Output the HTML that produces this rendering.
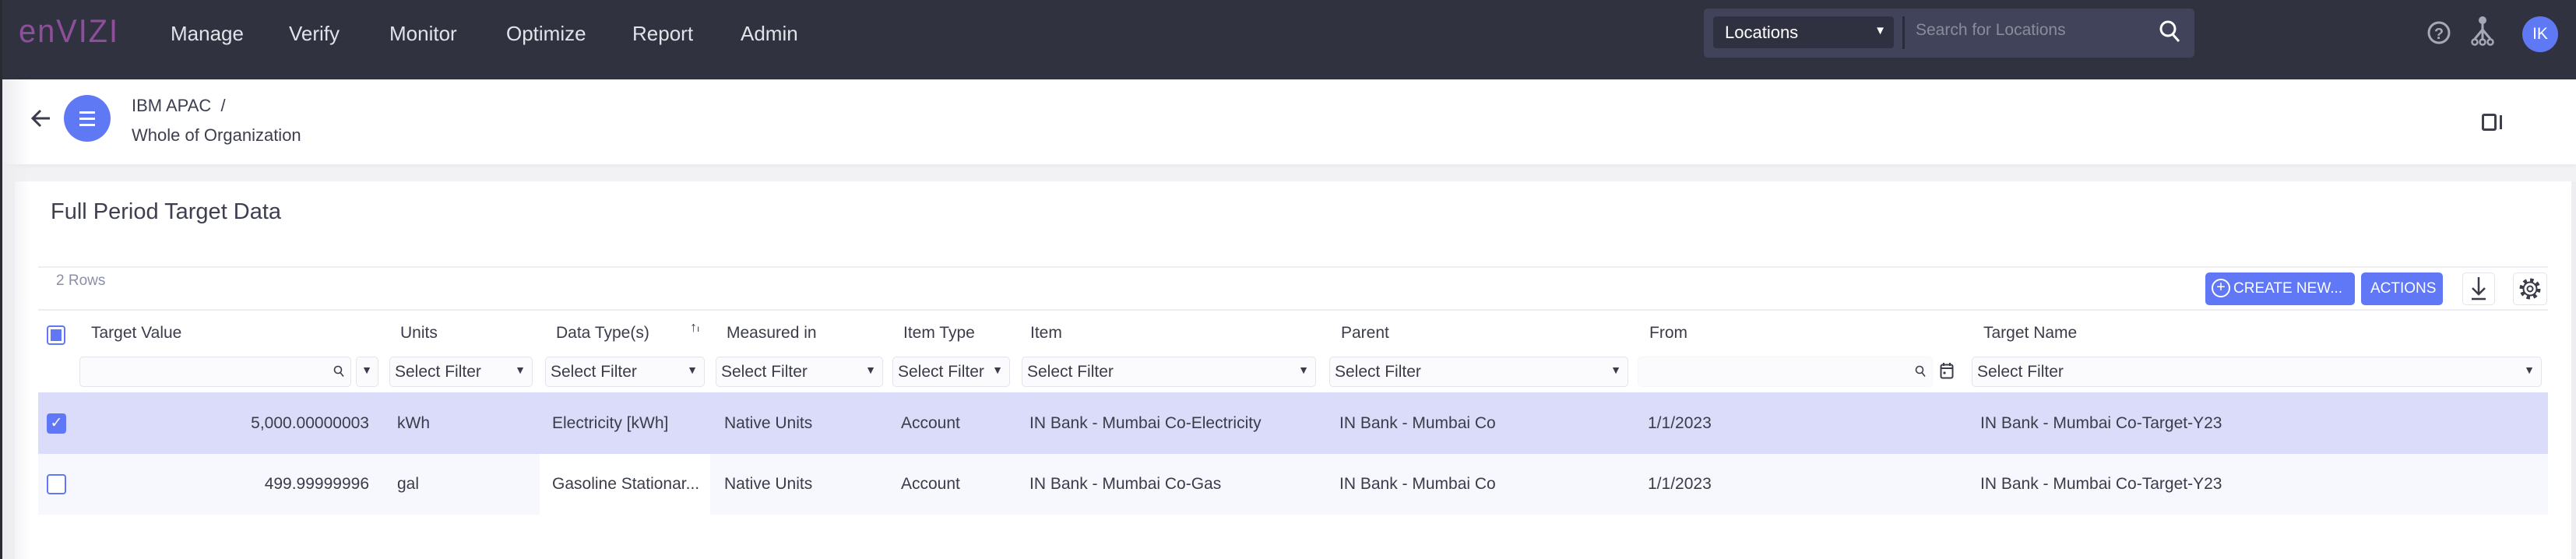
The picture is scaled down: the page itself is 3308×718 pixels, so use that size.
<!DOCTYPE html>
<html><head><meta charset="utf-8">
<style>
*{margin:0;padding:0;box-sizing:border-box}
body{width:3308px;height:718px;overflow:hidden;background:#f2f2f5;font-family:"Liberation Sans",sans-serif;color:#3d3f50;position:relative}
.a{position:absolute}
.nav{left:0;top:0;width:3308px;height:102px;background:#31323f}
.nv{top:28px;font-size:26px;color:#e2e3ea}
.t{font-size:21px;color:#3a3c4a;white-space:nowrap}
.f{position:absolute;top:458px;height:39px;border:1px solid #e3e4ec;border-radius:5px;background:#fbfbfd;font-size:21px;color:#3a3c4a;padding:7px 6px;white-space:nowrap;overflow:hidden}
.f .c{position:absolute;right:8px;top:8px;font-size:14px}
.hd{top:416px}
.r1{top:532px}
.r2{top:610px}
</style></head><body>
<div class="a" style="left:0;top:0;width:3px;height:718px;background:#2a2b33;z-index:5"></div>
<div class="a nav"></div>
<div class="a" style="left:24px;top:16px;font-size:42px;color:#8d4f9c;letter-spacing:2px;transform:scaleX(.95);transform-origin:left">enVIZI</div>
<div class="a nv" style="left:219px">Manage</div>
<div class="a nv" style="left:371px">Verify</div>
<div class="a nv" style="left:500px">Monitor</div>
<div class="a nv" style="left:650px">Optimize</div>
<div class="a nv" style="left:812px">Report</div>
<div class="a nv" style="left:951px">Admin</div>
<div class="a" style="left:2188px;top:11px;width:630px;height:63px;background:#41435a;border-radius:5px"></div>
<div class="a" style="left:2200px;top:21px;width:232px;height:41px;background:#2f3140;border-radius:4px;color:#fff;font-size:22px;padding:8px 15px">Locations<span style="position:absolute;right:10px;top:10px;font-size:15px">▼</span></div>
<div class="a" style="left:2443px;top:21px;width:3px;height:42px;background:#2a2b38"></div>
<div class="a" style="left:2460px;top:27px;font-size:21px;color:#8a8c99">Search for Locations</div>
<svg class="a" style="left:2772px;top:25px" width="30" height="32" viewBox="0 0 30 32"><circle cx="12" cy="12" r="9" fill="none" stroke="#fff" stroke-width="3"/><path d="M18 19l8 9" stroke="#fff" stroke-width="3"/></svg>
<svg class="a" style="left:3115px;top:24px" width="34" height="40" viewBox="0 0 34 40"><circle cx="17" cy="18" r="13" fill="none" stroke="#a5a8b8" stroke-width="3"/><text x="17" y="26" font-size="20" text-anchor="middle" fill="#a5a8b8" font-family="Liberation Sans" font-weight="bold">?</text></svg>
<svg class="a" style="left:3172px;top:20px" width="32" height="42" viewBox="0 0 32 42"><circle cx="16" cy="6" r="5" fill="#a5a8b8"/><path d="M16 10v16M16 18L6 30M16 18l10 12M16 24v8" stroke="#a5a8b8" stroke-width="3" fill="none"/><circle cx="6" cy="34" r="3.5" fill="none" stroke="#a5a8b8" stroke-width="2.5"/><circle cx="16" cy="34" r="3.5" fill="none" stroke="#a5a8b8" stroke-width="2.5"/><circle cx="26" cy="34" r="3.5" fill="none" stroke="#a5a8b8" stroke-width="2.5"/></svg>
<div class="a" style="left:3239px;top:21px;width:46px;height:46px;border-radius:50%;background:#5f79f5;color:#fff;font-size:21px;text-align:center;line-height:46px">IK</div>

<div class="a" style="left:0;top:102px;width:3308px;height:109px;background:#fff;box-shadow:0 2px 6px rgba(0,0,0,.05)"></div>
<div class="a" style="left:3px;top:102px;width:36px;height:616px;background:linear-gradient(90deg,#ececef,rgba(255,255,255,0));z-index:3"></div>
<svg class="a" style="left:38px;top:138px" width="30" height="28" viewBox="0 0 30 28"><path d="M26 14H5M14 4L4 14l10 10" stroke="#3a3c4a" stroke-width="3" fill="none"/></svg>
<div class="a" style="left:82px;top:122px;width:60px;height:60px;border-radius:50%;background:#5f79f5"></div>
<div class="a" style="left:102px;top:143px;width:20px;height:3px;background:#fff;box-shadow:0 8px 0 #fff,0 16px 0 #fff"></div>
<div class="a" style="left:169px;top:123px;font-size:22px;color:#3d3f50">IBM APAC &nbsp;/</div>
<div class="a" style="left:169px;top:161px;font-size:22px;color:#3d3f50">Whole of Organization</div>
<div class="a" style="left:3187px;top:146px;width:19px;height:22px;border:3px solid #3d3f50;border-radius:3px"></div>
<div class="a" style="left:3210px;top:148px;width:3px;height:18px;background:#3d3f50"></div>

<div class="a" style="left:19px;top:233px;width:3283px;height:485px;background:#fff"></div>
<div class="a" style="left:65px;top:256px;font-size:29px;color:#3d3f50">Full Period Target Data</div>
<div class="a" style="left:49px;top:342px;width:3223px;height:2px;background:#eceef3"></div>
<div class="a" style="left:72px;top:350px;font-size:19px;color:#8a8fa8">2 Rows</div>
<div class="a" style="left:2832px;top:350px;width:192px;height:42px;background:#6078f5;border-radius:5px;color:#fff;font-size:19px;padding:10px 0 0 36px">CREATE NEW...</div>
<div class="a" style="left:2840px;top:358px;width:24px;height:24px;border:2px solid #fff;border-radius:50%;color:#fff;font-size:20px;line-height:19px;text-align:center">+</div>
<div class="a" style="left:3032px;top:350px;width:105px;height:42px;background:#6078f5;border-radius:5px;color:#fff;font-size:19px;padding:10px 0 0 12px">ACTIONS</div>
<div class="a" style="left:3162px;top:350px;width:42px;height:42px;border:1px solid #e3e4ec;border-radius:5px"></div>
<svg class="a" style="left:3171px;top:354px" width="24" height="34" viewBox="0 0 24 34"><path d="M12 2v22M4 16l8 8 8-8M3 30h18" stroke="#3a3c4a" stroke-width="2.5" fill="none"/></svg>
<div class="a" style="left:3227px;top:350px;width:44px;height:42px;border:1px solid #e3e4ec;border-radius:5px"></div>
<svg class="a" style="left:3234px;top:356px" width="30" height="30" viewBox="0 0 30 30"><circle cx="15" cy="15" r="11" fill="none" stroke="#3a3c4a" stroke-width="5" stroke-dasharray="4.3 4.3"/><circle cx="15" cy="15" r="8.5" fill="#fff" stroke="#3a3c4a" stroke-width="2"/><circle cx="15" cy="15" r="3.5" fill="none" stroke="#3a3c4a" stroke-width="2"/></svg>

<div class="a" style="left:49px;top:397px;width:3223px;height:2px;background:#eceef3"></div>
<div class="a" style="left:60px;top:418px;width:24px;height:25px;border:2px solid #6078f5;border-radius:4px;background:#fff"><div style="margin:3px;width:14px;height:15px;background:#6078f5"></div></div>
<div class="a t hd" style="left:117px">Target Value</div>
<div class="a t hd" style="left:514px">Units</div>
<div class="a t hd" style="left:714px">Data Type(s)</div>
<div class="a t hd" style="left:886px;font-size:18px;top:410px">↑<span style="font-size:12px">ı</span></div>
<div class="a t hd" style="left:933px">Measured in</div>
<div class="a t hd" style="left:1160px">Item Type</div>
<div class="a t hd" style="left:1323px">Item</div>
<div class="a t hd" style="left:1722px">Parent</div>
<div class="a t hd" style="left:2118px">From</div>
<div class="a t hd" style="left:2547px">Target Name</div>
<div class="f" style="left:102px;width:349px"><svg class="c" style="top:10px" width="14" height="16" viewBox="0 0 14 16"><circle cx="6" cy="6" r="4.5" fill="none" stroke="#3a3c4a" stroke-width="1.6"/><path d="M9 9.5l4 5" stroke="#3a3c4a" stroke-width="1.6"/></svg></div>
<div class="f" style="left:457px;width:29px"><span class="c" style="right:7px">▼</span></div>
<div class="f" style="left:500px;width:184px">Select Filter<span class="c">▼</span></div>
<div class="f" style="left:700px;width:205px">Select Filter<span class="c">▼</span></div>
<div class="f" style="left:919px;width:215px">Select Filter<span class="c">▼</span></div>
<div class="f" style="left:1146px;width:151px;padding-right:30px">Select Filter<span class="c" style="background:#fbfbfd;padding-left:4px">▼</span></div>
<div class="f" style="left:1312px;width:378px">Select Filter<span class="c">▼</span></div>
<div class="f" style="left:1707px;width:384px">Select Filter<span class="c">▼</span></div>
<div class="f" style="left:2103px;width:379px;border-color:#f6f6f9"><svg class="c" style="top:10px" width="14" height="16" viewBox="0 0 14 16"><circle cx="6" cy="6" r="4.5" fill="none" stroke="#3a3c4a" stroke-width="1.6"/><path d="M9 9.5l4 5" stroke="#3a3c4a" stroke-width="1.6"/></svg></div>
<svg class="a" style="left:2491px;top:465px" width="18" height="22" viewBox="0 0 18 22"><rect x="1.5" y="3.5" width="15" height="17" rx="2" fill="none" stroke="#3a3c4a" stroke-width="2"/><path d="M1.5 8h15M5 1v4M13 1v4" stroke="#3a3c4a" stroke-width="2"/><circle cx="6" cy="14" r="1.6" fill="#3a3c4a"/></svg>
<div class="f" style="left:2532px;width:732px">Select Filter<span class="c">▼</span></div>
<div class="a" style="left:49px;top:504px;width:3223px;height:79px;background:#dadcf9"></div>
<div class="a" style="left:49px;top:583px;width:3223px;height:78px;background:#f7f8fd"></div>
<div class="a" style="left:693px;top:583px;width:219px;height:78px;background:#fff"></div>
<div class="a" style="left:60px;top:531px;width:25px;height:26px;background:#6078f5;border-radius:4px;color:#fff;font-size:19px;text-align:center;line-height:26px">✓</div>
<div class="a" style="left:60px;top:609px;width:25px;height:26px;border:2px solid #6078f5;border-radius:4px;background:#fff"></div>
<div class="a t r1" style="left:200px;width:274px;text-align:right">5,000.00000003</div>
<div class="a t r1" style="left:510px">kWh</div>
<div class="a t r1" style="left:709px">Electricity [kWh]</div>
<div class="a t r1" style="left:930px">Native Units</div>
<div class="a t r1" style="left:1157px">Account</div>
<div class="a t r1" style="left:1322px">IN Bank - Mumbai Co-Electricity</div>
<div class="a t r1" style="left:1720px">IN Bank - Mumbai Co</div>
<div class="a t r1" style="left:2116px">1/1/2023</div>
<div class="a t r1" style="left:2543px">IN Bank - Mumbai Co-Target-Y23</div>
<div class="a t r2" style="left:200px;width:274px;text-align:right">499.99999996</div>
<div class="a t r2" style="left:510px">gal</div>
<div class="a t r2" style="left:709px">Gasoline Stationar...</div>
<div class="a t r2" style="left:930px">Native Units</div>
<div class="a t r2" style="left:1157px">Account</div>
<div class="a t r2" style="left:1322px">IN Bank - Mumbai Co-Gas</div>
<div class="a t r2" style="left:1720px">IN Bank - Mumbai Co</div>
<div class="a t r2" style="left:2116px">1/1/2023</div>
<div class="a t r2" style="left:2543px">IN Bank - Mumbai Co-Target-Y23</div>
<div class="a" style="left:3302px;top:233px;width:6px;height:485px;background:#eeeef2"></div>
</body></html>
